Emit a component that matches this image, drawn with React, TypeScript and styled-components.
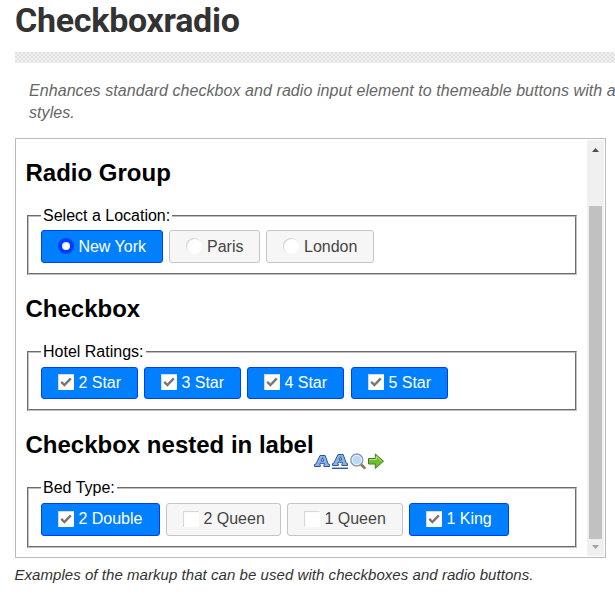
import React from "react";
import styled, { createGlobalStyle, css } from "styled-components";

const Global = createGlobalStyle`
  * { box-sizing: border-box; }
  body { margin: 0; background: #fff; overflow: hidden; font-family: "Liberation Sans", Arial, sans-serif; }
`;

const Page = styled.main`
  width: 615px;
  height: 599px;
  padding-left: 15px;
  overflow: hidden;
`;

const Title = styled.h1`
  margin: 0;
  height: 52px;
  font: 700 34px/40px Roboto, sans-serif;
  letter-spacing: -0.28px;
  color: #333;
  white-space: nowrap;
`;

const Divider = styled.div`
  height: 11px;
  background-color: #f0f0f0;
  background-image: radial-gradient(circle at 1px 1px, #e0e0e0 1px, transparent 1.2px),
    radial-gradient(circle at 1px 1px, #e2e2e2 1px, transparent 1.2px);
  background-size: 4px 4px;
  background-position: 0 0, 2px 2px;
`;

const Intro = styled.p`
  margin: 17px 0 0 14px;
  height: 58px;
  font-size: 16px;
  line-height: 22px;
  font-style: italic;
  letter-spacing: 0.065px;
  color: #666;
  white-space: nowrap;
`;

const Frame = styled.section`
  display: flex;
  justify-content: space-between;
  width: 591px;
  height: 420px;
  border: 1px solid #bbb;
  padding: 1px 1px 1px 0;
`;

const Content = styled.div`
  padding: 19px 0 0 9.5px;
`;

const Group = styled.div`
  height: 136px;
`;

const HeadingRow = styled.div`
  display: flex;
  height: 48px;
`;

const Heading = styled.h2`
  margin: 0;
  font-size: 24px;
  line-height: 28px;
  font-weight: 700;
  color: #000;
  white-space: nowrap;
`;

const Tools = styled.div`
  display: flex;
  margin: 21px 0 0 -1px;
`;

const Fieldset = styled.fieldset<{ $height: number; $top: number }>`
  width: 550px;
  height: ${(p) => p.$height}px;
  margin: 0 0 0 1.5px;
  padding: ${(p) => p.$top}px 12px 0;
  border: 2px groove #c0c0c0;
`;

const Legend = styled.legend`
  padding: 0 2px;
  font-size: 16px;
  line-height: 18px;
  color: #000;
`;

const Options = styled.div<{ $height: number }>`
  display: flex;
  gap: 6px;
  height: ${(p) => p.$height}px;
`;

const Option = styled.label<{ $on?: boolean; $width: number }>`
  display: flex;
  align-items: center;
  flex: none;
  width: ${(p) => p.$width}px;
  padding: 0 0 1px 16px;
  border: 1px solid ${(p) => (p.$on ? "#003eff" : "#c5c5c5")};
  border-radius: 3px;
  background: ${(p) => (p.$on ? "#007fff" : "#f6f6f6")};
  color: ${(p) => (p.$on ? "#fff" : "#454545")};
  font-size: 16px;
  white-space: nowrap;

  &:nth-child(4) {
    margin-left: ${(p) => (p.$width === 97 ? 1 : 0)}px;
  }
`;

const OptionText = styled.span<{ $shift: number }>`
  padding-top: ${(p) => p.$shift}px;
`;

const Mark = styled.span<{ $radio?: boolean; $on?: boolean }>`
  display: flex;
  align-items: center;
  justify-content: center;
  flex: none;
  width: 16px;
  height: 16px;
  margin-right: ${(p) => (p.$radio && !p.$on ? 5 : 4.4)}px;
  margin-bottom: ${(p) => (p.$radio ? 0 : 1)}px;
  border-radius: ${(p) => (p.$radio ? "8px" : "1px")};
  background: #fff;
  box-shadow: inset 1px 1px 1px #d4d4d4;
  ${(p) =>
    p.$radio &&
    p.$on &&
    css`
      border: 4px solid #003eff;
    `}
`;

const Track = styled.div`
  display: flex;
  flex-direction: column;
  align-items: center;
  width: 17px;
  height: 100%;
  background: #f0f0f0;
`;

const Thumb = styled.div`
  width: 13px;
  height: 333px;
  background: #c1c1c1;
`;

const ArrowBox = styled.div<{ $h: number; $top: number }>`
  height: ${(p) => p.$h}px;
  padding-top: ${(p) => p.$top}px;
  line-height: 0;
`;

const Caption = styled.p`
  margin: 8px 0 0 -0.5px;
  font-size: 15px;
  line-height: 18px;
  font-style: italic;
  letter-spacing: 0.05px;
  color: #333;
  white-space: nowrap;
`;

const Check = () => (
  <svg width="12" height="10" viewBox="0 0 12 10" fill="none" stroke="#777" strokeWidth="2.4">
    <path d="M1.2 4.8 4.4 8 10.8 1.4" />
  </svg>
);

const LetterIcon = ({ underline }: { underline?: boolean }) => (
  <svg width="18" height="18" viewBox="0 0 18 18">
    <path
      fillRule="evenodd"
      d="M1.5 14.5v-2l1.4-.4L7 3.5h5.2l3 8.6 1.3.4v2h-5.6v-1.8l.8-.4-.3-1H7l-.5 1 .8.4v1.8zM8 9h2.6L9.6 5.7z"
      fill="#8bb4e6"
      stroke="#2d5698"
      strokeWidth="1"
      transform={underline ? "translate(0 -1)" : undefined}
    />
    {underline && <path d="M1 16.3h16" stroke="#2d5698" strokeWidth="1.4" />}
  </svg>
);

const SearchIcon = () => (
  <svg width="18" height="18" viewBox="0 0 18 18">
    <path d="m12 12.5 3.5 3.3" stroke="#927456" strokeWidth="2.6" strokeLinecap="round" />
    <circle cx="7.8" cy="8" r="6" fill="#b8d9f5" stroke="#929aa3" strokeWidth="1.5" />
    <circle cx="7.8" cy="8" r="4.7" fill="none" stroke="#e8f4ff" />
  </svg>
);

const ArrowIcon = () => (
  <svg width="18" height="18" viewBox="0 0 18 18">
    <path d="M1.5 6.5h6.8V2l8.2 7.2-8.2 7.2V12H1.5z" fill="#72bd2b" stroke="#3c7d22" />
    <path d="M2.5 7.5h6.8V4.3L14.8 9.2" fill="none" stroke="#b5e678" />
  </svg>
);

type Item = { text: string; width: number; on?: boolean };

type OptionSetProps = {
  legend: string;
  items: Item[];
  radio?: boolean;
  height: number;
  top?: number;
  optionHeight?: number;
};

const OptionSet = ({ legend, items, radio, height, top = 6, optionHeight = 33 }: OptionSetProps) => (
  <Fieldset $height={height} $top={top}>
    <Legend>{legend}</Legend>
    <Options $height={optionHeight}>
      {items.map((i) => (
        <Option key={i.text} $on={i.on} $width={i.width}>
          <Mark $radio={radio} $on={i.on}>{i.on && !radio && <Check />}</Mark>
          <OptionText $shift={radio ? 2 : 0}>{i.text}</OptionText>
        </Option>
      ))}
    </Options>
  </Fieldset>
);

export default function App() {
  return (
    <>
      <Global />
      <Page>
        <Title>Checkboxradio</Title>
        <Divider />
        <Intro>
          Enhances standard checkbox and radio input element to themeable buttons with a
          <br />
          styles.
        </Intro>
        <Frame>
          <Content>
            <Group>
              <HeadingRow><Heading>Radio Group</Heading></HeadingRow>
              <OptionSet
                radio
                legend="Select a Location:"
                height={68}
                top={5}
                items={[
                  { text: "New York", width: 122, on: true },
                  { text: "Paris", width: 91 },
                  { text: "London", width: 108 },
                ]}
              />
            </Group>
            <Group>
              <HeadingRow><Heading>Checkbox</Heading></HeadingRow>
              <OptionSet
                legend="Hotel Ratings:"
                height={68}
                optionHeight={32}
                items={["2 Star", "3 Star", "4 Star", "5 Star"].map((text) => ({ text, width: 97, on: true }))}
              />
            </Group>
            <Group>
              <HeadingRow>
                <Heading>Checkbox nested in label</Heading>
                <Tools>
                  <LetterIcon />
                  <LetterIcon underline />
                  <SearchIcon />
                  <ArrowIcon />
                </Tools>
              </HeadingRow>
              <OptionSet
                legend="Bed Type:"
                height={69}
                items={[
                  { text: "2 Double", width: 119, on: true },
                  { text: "2 Queen", width: 115 },
                  { text: "1 Queen", width: 116 },
                  { text: "1 King", width: 100, on: true },
                ]}
              />
            </Group>
          </Content>
          <Track>
            <ArrowBox $h={66} $top={7}>
              <svg width="7" height="4"><path d="M0 4 3.5 0 7 4z" fill="#505050" /></svg>
            </ArrowBox>
            <Thumb />
            <ArrowBox $h={17} $top={5}>
              <svg width="7" height="4"><path d="M0 0h7L3.5 4z" fill="#a3a3a3" /></svg>
            </ArrowBox>
          </Track>
        </Frame>
        <Caption>Examples of the markup that can be used with checkboxes and radio buttons.</Caption>
      </Page>
    </>
  );
}
